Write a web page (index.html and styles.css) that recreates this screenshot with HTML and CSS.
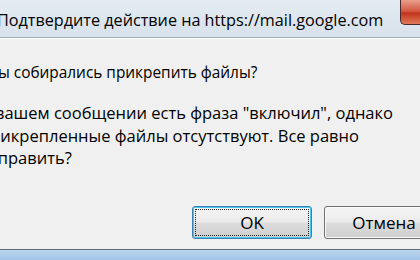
FILE: index.html
```html
<!DOCTYPE html>
<html lang="ru">
<head>
    <meta charset="UTF-8">
    <meta name="viewport" content="width=device-width, initial-scale=1.0">
    <title>Подтвердите действие</title>
    <link rel="stylesheet" href="styles.css">
</head>
<body>
    <div class="window">
        <div class="titlebar">
            <span class="title">Подтвердите действие на https://mail.google.com</span>
            <span class="btn-close"></span>
        </div>
        <div class="content">
            <p class="question">Вы собирались прикрепить файлы?</p>
            <p class="message">В вашем сообщении есть фраза "включил", однако<br>прикрепленные файлы отсутствуют. Все равно<br>отправить?</p>
            <div class="buttons">
                <button class="btn-dialog btn-default"><span class="focus">OK</span></button>
                <button class="btn-dialog">Отмена</button>
            </div>
        </div>
        <div class="frame-bottom"></div>
    </div>
</body>
</html>
```

FILE: styles.css
```css
body {
    margin: 0;
    padding: 0;
    font-family: 'Open Sans', 'Noto Sans', sans-serif;
    overflow: hidden;
    background-color: #f0f0f0;
}
.window {
    width: 420px;
    height: 260px;
    display: flex;
    flex-direction: column;
    overflow: hidden;
}
.titlebar {
    height: 37px;
    flex: none;
    display: flex;
    align-items: flex-start;
    background: linear-gradient(#e4ebf2, #d8e2ec);
    border-bottom: 1px solid #a3abb3;
    box-shadow: 0 1px 0 #fbfbfb;
}
.title {
    margin: 9px 0 0 -3px;
    font-size: 16.2px;
    color: #000;
    white-space: nowrap;
}
.btn-close {
    margin-left: auto;
    width: 19px;
    height: 24px;
    flex: none;
    border: 1px solid #4a2a2a;
    border-top: none;
    border-right: none;
    border-radius: 0 0 0 5px;
    background: linear-gradient(#e8a08e, #d45a44 45%, #c2341c 55%, #e07a5a);
}
.content {
    flex: 1;
}
.question {
    margin: 24px 0 0 -12px;
    font-size: 15.4px;
    line-height: 22px;
    white-space: nowrap;
}
.message {
    margin: 18px 0 0 -20px;
    font-size: 16.5px;
    line-height: 22.5px;
    white-space: nowrap;
}
.buttons {
    display: flex;
    justify-content: flex-end;
    gap: 12px;
    margin: 36px -24px 0 0;
}
.btn-dialog {
    width: 120px;
    height: 33px;
    padding: 0;
    font-family: 'Open Sans', 'Noto Sans', sans-serif;
    font-size: 17px;
    color: #000;
    border: 1px solid #707070;
    border-radius: 3px;
    background: linear-gradient(#f4f4f4, #ebebeb 48%, #dcdcdc 52%, #cfcfcf);
    box-shadow: inset 0 0 0 1px #fbfbfb;
}
.btn-default {
    border-color: #3c7fb1;
    box-shadow: inset 0 0 0 1px #48c7ee;
    padding: 2px;
}
.btn-default .focus {
    display: block;
    height: 100%;
    box-sizing: border-box;
    border: 1px dotted #222;
    line-height: 25px;
}
.frame-bottom {
    height: 10px;
    flex: none;
    border-top: 1px solid #5d6b7a;
    background: linear-gradient(#bcd6ef, #a4c4e6);
}
```
